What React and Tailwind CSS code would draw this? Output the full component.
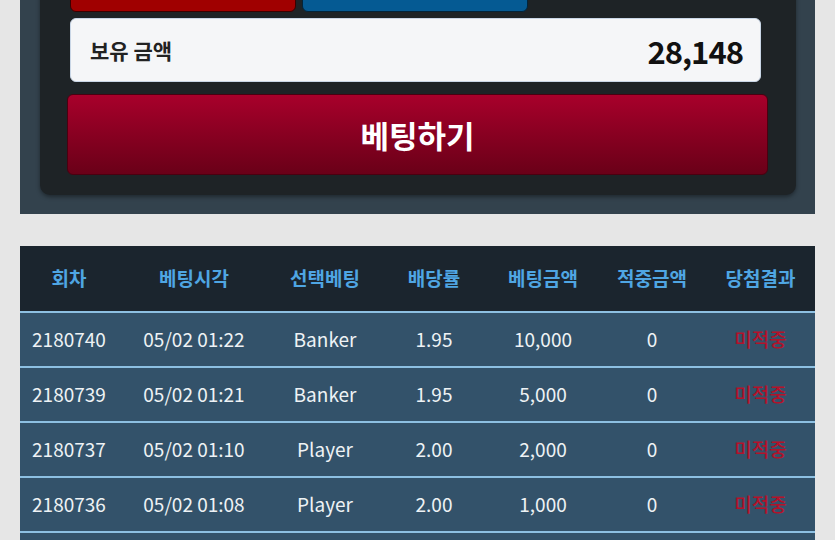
export default function App() {
  const rows = [
    ["2180740", "05/02 01:22", "Banker", "1.95", "10,000", "0", "미적중"],
    ["2180739", "05/02 01:21", "Banker", "1.95", "5,000", "0", "미적중"],
    ["2180737", "05/02 01:10", "Player", "2.00", "2,000", "0", "미적중"],
    ["2180736", "05/02 01:08", "Player", "2.00", "1,000", "0", "미적중"],
  ];
  const heads = ["회차", "베팅시각", "선택베팅", "배당률", "베팅금액", "적중금액", "당첨결과"];
  const cols = "grid grid-cols-[98px_152px_110px_108px_110px_108px_109px]";
  return (
    <div
      className="w-[835px] h-[540px] overflow-hidden bg-[#e6e6e6]"
      style={{ fontFamily: '"Noto Sans CJK KR", "Noto Sans", sans-serif' }}
    >
      <div className="mx-[20px] mt-[-60px] bg-[#33424d] pl-[20px] pr-[19px] pb-[19px]">
        <div className="bg-[#1e2326] rounded-b-[10px] pl-[30px] pr-[28px] pb-[20px] shadow-[0_2px_4px_rgba(0,0,0,0.4)]">
          <div className="flex gap-[6px]">
            <div className="w-[226px] h-[72px] bg-[#a00000] rounded-b-[6px] border border-[#3a0000]" />
            <div className="w-[226px] h-[72px] bg-[#055a93] rounded-b-[6px] border border-[#02243a]" />
          </div>
          <div className="mt-[6px] w-[691px] h-[64px] bg-[#f5f6f8] rounded-[6px] border border-[#c9d6e6] flex items-center justify-between pl-[19px] pr-[17px]">
            <span className="text-[21px] font-bold text-[#222] leading-none">보유 금액</span>
            <span className="text-[31px] font-bold text-[#111] tracking-[-1px] leading-none">28,148</span>
          </div>
          <div className="mt-[12px] ml-[-3px] w-[701px] h-[81px] rounded-[6px] border border-[#4a0010] bg-gradient-to-b from-[#a8002b] to-[#6a0018] flex items-center justify-center">
            <span className="text-[31px] font-bold text-white leading-none">베팅하기</span>
          </div>
        </div>
      </div>
      <div className="mx-[20px] mt-[32px]">
        <div className={`${cols} h-[65px] bg-[#1b252e] items-center`}>
          {heads.map((h) => (
            <div key={h} className="text-center text-[19px] font-bold text-[#4fa6e3]">
              {h}
            </div>
          ))}
        </div>
        {rows.map((r, i) => (
          <div key={i} className={`${cols} h-[55px] bg-[#33526a] border-t-2 border-[#8dc0e2] items-center`}>
            {r.map((c, j) => (
              <div
                key={j}
                className={`text-center text-[19px] leading-none pb-[2px] ${j === 6 ? "text-[#b3122a] font-medium" : "text-[#eef2f5]"}`}
              >
                {c}
              </div>
            ))}
          </div>
        ))}
        <div className="h-[55px] bg-[#33526a] border-t-2 border-[#8dc0e2]" />
      </div>
    </div>
  );
}
